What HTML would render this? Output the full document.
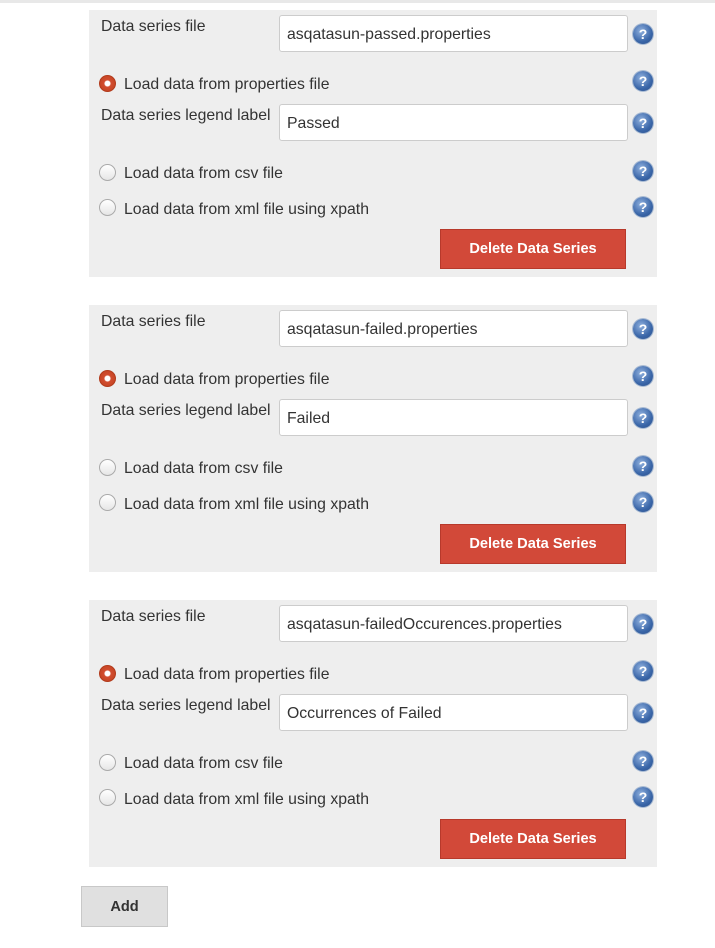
<!DOCTYPE html>
<html><head><meta charset="utf-8"><style>
body{margin:0;width:715px;height:948px;background:#fff;font-family:"Liberation Sans",sans-serif;color:#333;position:relative;overflow:hidden}
.topline{position:absolute;left:0;top:0;width:715px;height:3px;background:#e8e8e8}
.panel{position:absolute;left:89px;width:568px;height:267px;background:#eeeeee}
.t{position:absolute;font-size:15.8px;line-height:18px;white-space:nowrap;margin-top:2px}
.in{position:absolute;left:190px;width:349px;height:37px;background:#fff;border:1px solid #ccc;border-radius:3px;box-sizing:border-box;font-size:15.8px;line-height:37px;padding-left:7px}
.h{position:absolute;left:544px;width:20px;height:20px;border-radius:50%;background:radial-gradient(circle at 40% 35%,#8fb0de,#3a66a8 60%,#2b4f8a);box-shadow:0 0 0 1px #a9bbd3;color:#fff;font-weight:bold;font-size:14px;line-height:20px;text-align:center}
.r{position:absolute;left:10px;width:15px;height:15px;border-radius:50%;border:1px solid #aaa;background:linear-gradient(#fff,#e6e6e6);margin-top:1px}
.r.on{background:radial-gradient(circle,#fff 0 2.5px,#d24d2f 3.5px,#c0411f 100%);border-color:#b23b1c}
.btn{position:absolute;left:351px;top:219px;width:186px;height:40px;background:#d24939;border:1px solid #b7392b;box-sizing:border-box;color:#fff;font-weight:bold;font-size:14.6px;line-height:38px;text-align:center}
.add{position:absolute;left:81px;top:886px;width:87px;height:41px;background:#e0e0e0;border:1px solid #c8c8c8;box-sizing:border-box;font-weight:bold;font-size:14.6px;line-height:40px;text-align:center;color:#333}
</style></head><body>
<div class="topline"></div>

<div class="panel" style="top:10px">
<div class="t" style="left:12px;top:6px">Data series file</div>
<div class="in" style="top:5px">asqatasun-passed.properties</div><div class="h" style="top:14px">?</div>
<div class="r on" style="top:64px"></div><div class="t" style="left:35px;top:64px">Load data from properties file</div><div class="h" style="top:61px">?</div>
<div class="t" style="left:12px;top:95px">Data series legend label</div>
<div class="in" style="top:94px">Passed</div><div class="h" style="top:103px">?</div>
<div class="r" style="top:153px"></div><div class="t" style="left:35px;top:153px">Load data from csv file</div><div class="h" style="top:151px">?</div>
<div class="r" style="top:188px"></div><div class="t" style="left:35px;top:189px">Load data from xml file using xpath</div><div class="h" style="top:187px">?</div>
<div class="btn">Delete Data Series</div>
</div>

<div class="panel" style="top:305px">
<div class="t" style="left:12px;top:6px">Data series file</div>
<div class="in" style="top:5px">asqatasun-failed.properties</div><div class="h" style="top:14px">?</div>
<div class="r on" style="top:64px"></div><div class="t" style="left:35px;top:64px">Load data from properties file</div><div class="h" style="top:61px">?</div>
<div class="t" style="left:12px;top:95px">Data series legend label</div>
<div class="in" style="top:94px">Failed</div><div class="h" style="top:103px">?</div>
<div class="r" style="top:153px"></div><div class="t" style="left:35px;top:153px">Load data from csv file</div><div class="h" style="top:151px">?</div>
<div class="r" style="top:188px"></div><div class="t" style="left:35px;top:189px">Load data from xml file using xpath</div><div class="h" style="top:187px">?</div>
<div class="btn">Delete Data Series</div>
</div>

<div class="panel" style="top:600px">
<div class="t" style="left:12px;top:6px">Data series file</div>
<div class="in" style="top:5px">asqatasun-failedOccurences.properties</div><div class="h" style="top:14px">?</div>
<div class="r on" style="top:64px"></div><div class="t" style="left:35px;top:64px">Load data from properties file</div><div class="h" style="top:61px">?</div>
<div class="t" style="left:12px;top:95px">Data series legend label</div>
<div class="in" style="top:94px">Occurrences of Failed</div><div class="h" style="top:103px">?</div>
<div class="r" style="top:153px"></div><div class="t" style="left:35px;top:153px">Load data from csv file</div><div class="h" style="top:151px">?</div>
<div class="r" style="top:188px"></div><div class="t" style="left:35px;top:189px">Load data from xml file using xpath</div><div class="h" style="top:187px">?</div>
<div class="btn">Delete Data Series</div>
</div>

<div class="add">Add</div>
</body></html>
